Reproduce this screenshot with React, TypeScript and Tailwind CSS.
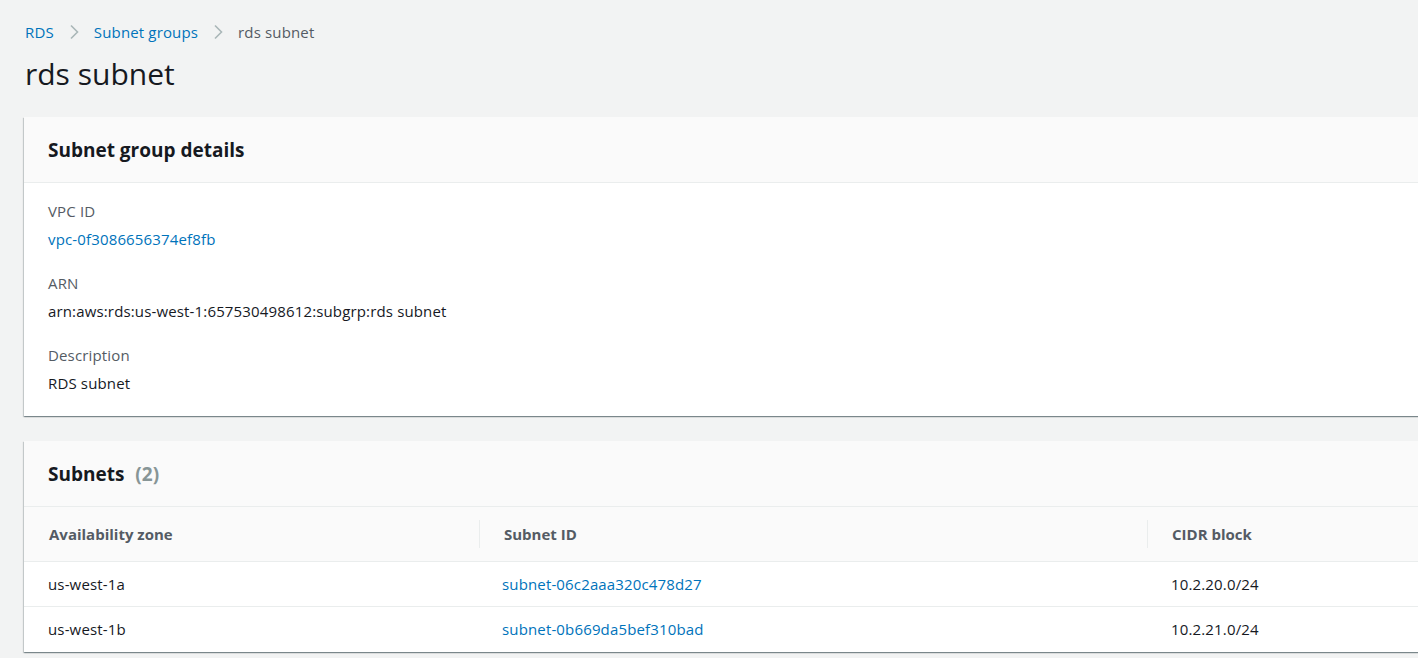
import React from "react";

const font = { fontFamily: '"Open Sans", "Liberation Sans", sans-serif' };

function Chevron() {
  return (
    <svg width="10" height="16" viewBox="0 0 10 16" className="mx-[15px]" aria-hidden>
      <polyline points="2,1.5 8.5,8 2,14.5" fill="none" stroke="#aab7b8" strokeWidth="1.6" />
    </svg>
  );
}

function Field({ label, value, link }: { label: string; value: string; link?: boolean }) {
  return (
    <div className="flex flex-col">
      <div className="text-[15px] leading-[22px] tracking-[0.15px] text-[#545b64]">{label}</div>
      <div
        className={`mt-[6px] text-[15px] leading-[22px] tracking-[0.15px] ${link ? "text-[#0073bb]" : "text-[#16191f]"}`}
      >
        {value}
      </div>
    </div>
  );
}

const cardShadow =
  "shadow-[0_1px_1px_0_rgba(0,28,36,0.3),1px_1px_1px_0_rgba(0,28,36,0.15),-1px_1px_1px_0_rgba(0,28,36,0.15)]";

export default function App() {
  const rows = [
    { az: "us-west-1a", id: "subnet-06c2aaa320c478d27", cidr: "10.2.20.0/24" },
    { az: "us-west-1b", id: "subnet-0b669da5bef310bad", cidr: "10.2.21.0/24" },
  ];
  return (
    <div className="w-[1418px] h-[658px] overflow-hidden bg-[#f2f3f3] text-[#16191f]" style={font}>
      <div className="pl-[24px] pt-[20px]">
        <nav className="flex items-center h-[24px] text-[15px] tracking-[0.15px] pl-[1px]">
          <span className="text-[#0073bb]">RDS</span>
          <Chevron />
          <span className="text-[#0073bb]">Subnet groups</span>
          <Chevron />
          <span className="text-[#545b64]">rds subnet</span>
        </nav>
        <h1 className="mt-[12px] text-[30px] leading-[36px] font-normal pl-[1px] text-[#16191f]">rds subnet</h1>

        <section className={`mt-[25px] w-[1420px] bg-white ${cardShadow}`}>
          <div className="h-[66px] bg-[#fafafa] border-b border-[#eaeded] flex items-center px-[24px]">
            <h2 className="text-[19px] font-bold leading-[24px]">Subnet group details</h2>
          </div>
          <div className="px-[24px] pt-[17px] pb-[22px] flex flex-col gap-[22px]">
            <Field label="VPC ID" value="vpc-0f3086656374ef8fb" link />
            <Field label="ARN" value="arn:aws:rds:us-west-1:657530498612:subgrp:rds subnet" />
            <Field label="Description" value="RDS subnet" />
          </div>
        </section>

        <section className={`mt-[25px] w-[1420px] bg-white ${cardShadow}`}>
          <div className="h-[66px] bg-[#fafafa] border-b border-[#eaeded] flex items-center px-[24px]">
            <h2 className="text-[19px] font-bold leading-[24px]">
              Subnets <span className="text-[#879596] ml-[6px]">(2)</span>
            </h2>
          </div>
          <div className="grid grid-cols-[455px_668px_1fr] h-[55px] bg-[#fafafa] border-b border-[#eaeded] items-center text-[15px] font-bold text-[#545b64]">
            <div className="pl-[25px]">Availability zone</div>
            <div className="h-[28px] border-l border-[#eaeded] flex items-center pl-[24px]">Subnet ID</div>
            <div className="h-[28px] border-l border-[#eaeded] flex items-center pl-[24px]">CIDR block</div>
          </div>
          {rows.map((r, i) => (
            <div
              key={r.id}
              className={`grid grid-cols-[455px_668px_1fr] h-[45px] items-center text-[15px] tracking-[0.15px] ${i === 0 ? "border-b border-[#eaeded]" : ""}`}
            >
              <div className="pl-[24px]">{r.az}</div>
              <div className="pl-[23px] text-[#0073bb]">{r.id}</div>
              <div className="pl-[24px]">{r.cidr}</div>
            </div>
          ))}
        </section>
      </div>
    </div>
  );
}
